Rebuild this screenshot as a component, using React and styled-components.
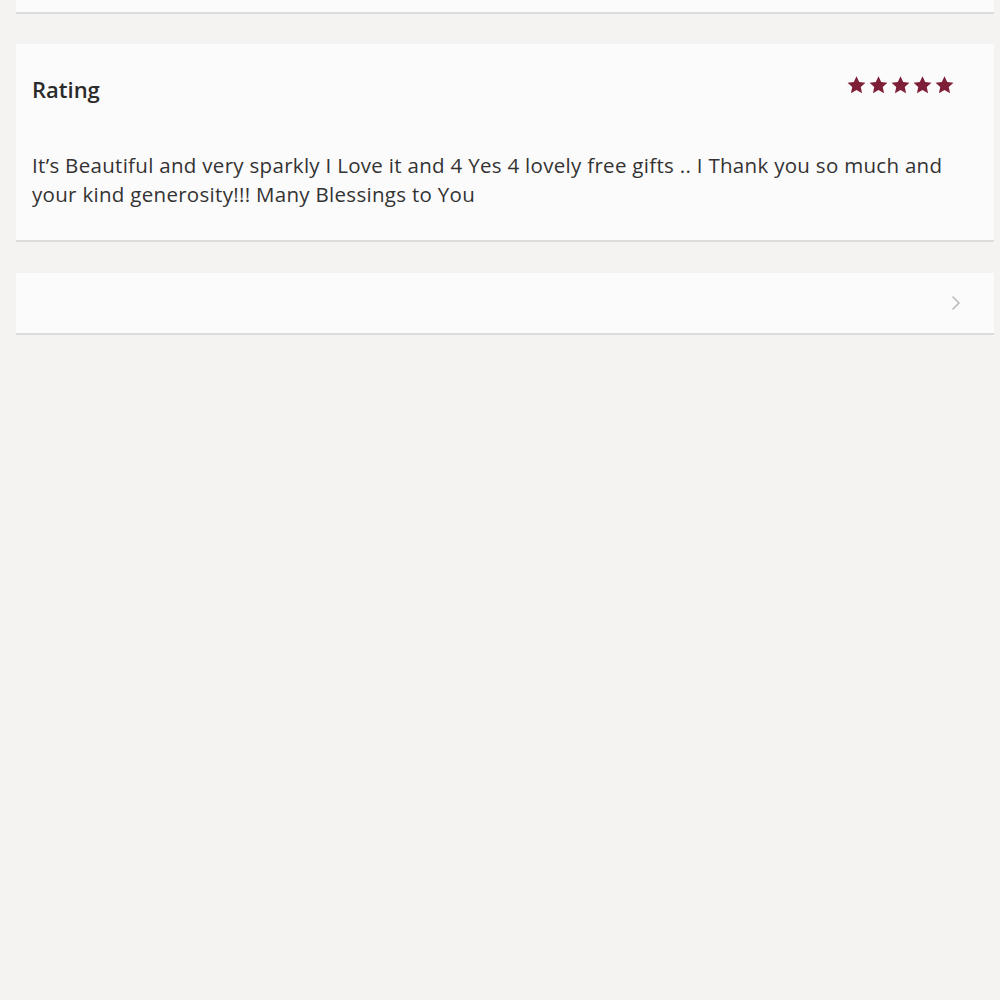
import React from "react";
import styled, { createGlobalStyle } from "styled-components";
import { ChevronRight } from "lucide-react";

const GlobalStyle = createGlobalStyle`
  html, body {
    margin: 0;
    padding: 0;
    background: #f4f3f1;
  }
  body {
    font-family: "Open Sans", Lato, sans-serif;
    color: #333;
  }
`;

const Page = styled.div`
  display: flex;
  flex-direction: column;
  gap: 30px;
  padding: 0 6px 0 16px;
  min-height: 1000px;
  box-sizing: border-box;
`;

const Card = styled.div`
  background: #fcfbfb;
  border-bottom: 2px solid #dddcdb;
  box-sizing: border-box;
  height: ${({ h }) => (h ? `${h}px` : "auto")};
`;

const RatingCard = styled(Card)`
  height: 198px;
  padding: 30px 39px 0 16px;
`;

const Header = styled.div`
  display: flex;
  align-items: flex-start;
  justify-content: space-between;
`;

const Title = styled.div`
  font-size: 22px;
  font-weight: 600;
  color: #2b2b2b;
`;

const Stars = styled.div`
  display: flex;
  gap: 1px;
  padding-top: 1px;
`;

const Review = styled.p`
  margin: 47px 0 0;
  font-size: 20.5px;
  letter-spacing: 0.3px;
  line-height: 29px;
  color: #333;
`;

const LinkRow = styled(Card)`
  display: flex;
  align-items: center;
  justify-content: flex-end;
  margin-top: 1px;
  padding-right: 26px;
  color: #b9b9b9;
`;

const Star = () => (
  <svg width="21" height="20" viewBox="0 0 24 23">
    <path
      d="M12 1.5l3.1 6.6 7.2.8-5.4 4.9 1.5 7.1L12 17.3l-6.4 3.6 1.5-7.1-5.4-4.9 7.2-.8z"
      fill="#7d1f36"
    />
  </svg>
);

export default function App() {
  return (
    <>
      <GlobalStyle />
      <Page>
        <Card h={14} />
        <RatingCard>
          <Header>
            <Title>Rating</Title>
            <Stars>
              {[0, 1, 2, 3, 4].map((i) => (
                <Star key={i} />
              ))}
            </Stars>
          </Header>
          <Review>
            It’s Beautiful and very sparkly I Love it and 4 Yes 4 lovely free
            gifts .. I Thank you so much and your kind generosity!!! Many
            Blessings to You
          </Review>
        </RatingCard>
        <LinkRow h={62}>
          <ChevronRight size={24} strokeWidth={1.6} />
        </LinkRow>
      </Page>
    </>
  );
}
